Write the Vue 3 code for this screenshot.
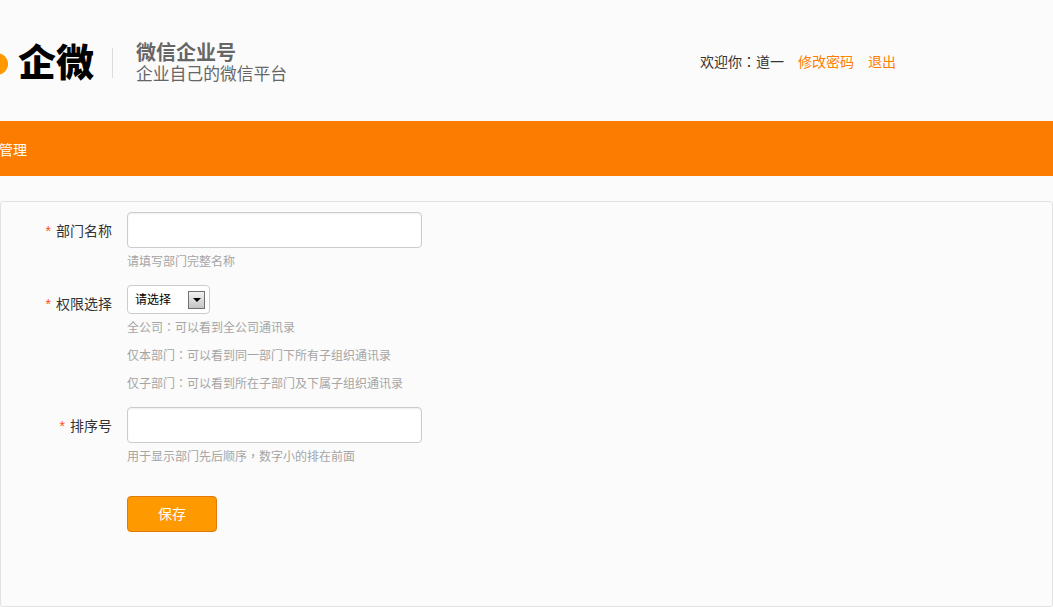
<script setup>
const hints = [
  ['全公司', '可以看到全公司通讯录'],
  ['仅本部门', '可以看到同一部门下所有子组织通讯录'],
  ['仅子部门', '可以看到所在子部门及下属子组织通讯录'],
]
</script>

<template>
  <div class="page">
    <header class="header">
      <span class="dot"></span>
      <span class="brand">企微</span>
      <span class="divider"></span>
      <div class="tagline">
        <div class="tag-title">微信企业号</div>
        <div class="tag-sub">企业自己的微信平台</div>
      </div>
      <div class="account">
        <span>欢迎你<span class="punct">：</span>道一</span>
        <a class="link">修改密码</a>
        <a class="link">退出</a>
      </div>
    </header>

    <nav class="nav"><span class="nav-item">部门管理</span></nav>

    <main class="panel">
      <div class="row">
        <label class="label"><i class="star">*</i>部门名称</label>
        <div class="field">
          <input class="input" type="text" />
          <p class="hint">请填写部门完整名称</p>
        </div>
      </div>

      <div class="row row-perm">
        <label class="label"><i class="star">*</i>权限选择</label>
        <div class="field">
          <div class="select">
            <span class="select-text">请选择</span>
            <span class="arrow-box"><span class="arrow"></span></span>
          </div>
          <div class="hints">
            <p v-for="h in hints" :key="h[0]" class="hint-line">{{ h[0] }}<span class="punct">：</span>{{ h[1] }}</p>
          </div>
        </div>
      </div>

      <div class="row row-sort">
        <label class="label"><i class="star">*</i>排序号</label>
        <div class="field">
          <input class="input" type="text" />
          <p class="hint">用于显示部门先后顺序<span class="punct">，</span>数字小的排在前面</p>
        </div>
      </div>

      <button class="save" type="button">保存</button>
    </main>
  </div>
</template>

<style>
html, body { background: #fbfbfb; overflow: hidden; }
</style>

<style scoped>
.page {
  width: 1053px;
  height: 607px;
  overflow: hidden;
  background: #fbfbfb;
  font-family: "Noto Sans CJK SC", "Liberation Sans", sans-serif;
  font-size: 14px;
  color: #333;
}
.punct { font-family: "Noto Sans CJK TC", sans-serif; }
.header {
  height: 121px;
  display: flex;
  align-items: center;
  padding: 7px 157px 0 0;
  box-sizing: border-box;
}
.dot {
  width: 22px;
  height: 22px;
  margin-left: -14px;
  border-radius: 50%;
  background: #ff9900;
  flex: none;
}
.brand {
  margin-left: 10px;
  margin-bottom: 8px;
  width: 76px;
  font-size: 38px;
  line-height: 44px;
  font-weight: 900;
  color: #000;
}
.divider {
  width: 1px;
  height: 30px;
  margin: 0 23px 2px 18px;
  background: #dcdcdc;
}
.tagline { margin-bottom: 4px; }
.tag-title {
  font-size: 20px;
  line-height: 22px;
  font-weight: 700;
  color: #666;
}
.tag-sub {
  font-size: 16.8px;
  line-height: 20px;
  color: #666;
}
.account {
  margin-left: auto;
  display: flex;
  gap: 14px;
  line-height: 20px;
  margin-top: -7px;
}
.link { color: #ff7e00; }
.nav {
  height: 55px;
  background: #fb7c00;
  display: flex;
  align-items: center;
}
.nav-item {
  margin-left: -29px;
  color: #fff;
  font-size: 14px;
}
.panel {
  margin-top: 25px;
  height: 406px;
  box-sizing: border-box;
  border: 1px solid #e2e2e2;
  border-radius: 3px;
  padding: 10px 0 0 0;
}
.row {
  display: flex;
  align-items: flex-start;
}
.row-perm { margin-top: 15px; }
.row-sort { margin-top: 10px; }
.label {
  width: 111px;
  flex: none;
  text-align: right;
  line-height: 36px;
  color: #333;
}
.star {
  color: #ff4d20;
  font-style: normal;
  margin-right: 5px;
  font-family: "Liberation Sans", sans-serif;
}
.field { margin-left: 15px; }
.input {
  display: block;
  width: 295px;
  height: 36px;
  box-sizing: border-box;
  border: 1px solid #ccc;
  border-radius: 4px;
  background: #fff;
  box-shadow: inset 0 1px 2px rgba(0, 0, 0, 0.07);
  outline: none;
  padding: 0 8px;
}
.hint {
  margin: 4px 0 0;
  font-size: 12px;
  line-height: 18px;
  color: #a5a5a5;
}
.select {
  width: 83px;
  height: 29px;
  box-sizing: border-box;
  border: 1px solid #ccc;
  border-radius: 4px;
  background: #fff;
  display: flex;
  align-items: center;
  justify-content: space-between;
  padding: 0 4px 0 8px;
  font-size: 12px;
  color: #000;
}
.select-text {
  margin-left: -1px;
  margin-bottom: 2px;
}
.arrow-box {
  width: 17px;
  height: 18px;
  box-sizing: border-box;
  border: 1px solid #707070;
  background: linear-gradient(#f2f2f2, #c4c4c4);
  display: flex;
  align-items: center;
  justify-content: center;
}
.arrow {
  width: 0;
  height: 0;
  border-left: 4px solid transparent;
  border-right: 4px solid transparent;
  border-top: 4px solid #000;
}
.hints { margin-top: -1px; }
.hint-line {
  margin: 0;
  font-size: 12px;
  line-height: 28px;
  color: #a5a5a5;
}
.save {
  display: block;
  margin: 31px 0 0 126px;
  width: 90px;
  height: 36px;
  border: 1px solid #e07a0a;
  border-radius: 4px;
  background: #ff9900;
  color: #fff;
  font-family: inherit;
  font-size: 14px;
  padding: 0 0 2px;
}
</style>
